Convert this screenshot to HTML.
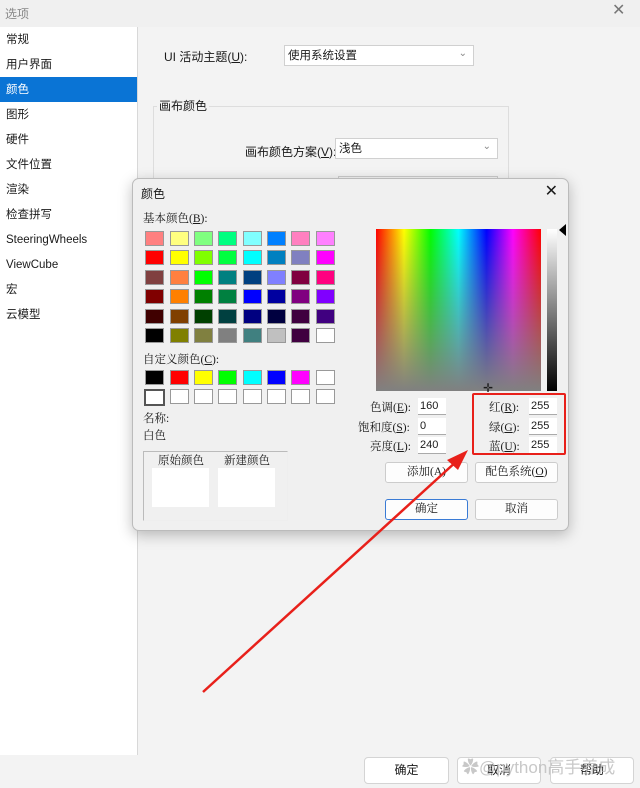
<!DOCTYPE html>
<html><head><meta charset="utf-8"><style>
*{margin:0;padding:0;box-sizing:border-box}
body{width:640px;height:788px;overflow:hidden;background:#f3f3f3;font-family:"Liberation Sans","Noto Sans CJK SC",sans-serif;font-size:12px;color:#1a1a1a;position:relative}
.abs{position:absolute}
.nav{left:0;top:27px;width:138px;height:728px;background:#fff;border-right:1px solid #d8d8d8}
.nav div{height:25px;line-height:26px;padding-left:6px;font-size:11.5px}
.nav .sel{background:#0a74d5;color:#fff}
.combo{background:#fff;border:1px solid #d0d0d0;height:21px;line-height:20px;padding-left:3px;font-size:11.5px}
.combo:after{content:"⌄";position:absolute;right:6px;top:-2px;color:#888;font-size:10px}
.dlg{left:132px;top:178px;width:437px;height:353px;background:#f0f0f0;border:1px solid #bbb;border-radius:7px;box-shadow:0 4px 14px rgba(0,0,0,.25);font-family:"Liberation Serif","Noto Serif CJK SC",serif}
.sw{position:absolute;width:19px;height:15px;border:1px solid #999}
.in{position:absolute;background:#fff;height:17px;border-bottom:1px solid #aaa;font-family:"Liberation Sans",sans-serif;font-size:11px;padding-left:2px;line-height:17px}
.btn{position:absolute;background:#fdfdfd;border:1px solid #ccc;border-radius:3px;text-align:center;line-height:19px;height:21px;font-size:11.5px}
.lbl{position:absolute;font-size:11.5px}
.bb{position:absolute;top:757px;height:27px;background:#fff;border:1px solid #d4d4d4;border-radius:4px;text-align:center;line-height:25px;font-size:12px}
</style></head><body>
<div class="abs" style="left:0;top:0;width:640px;height:27px;background:#f0f0f0"></div>
<div class="abs" style="left:5px;top:5px;color:#888;font-size:12px">选项</div>
<div class="abs" style="left:612px;top:0px;color:#777;font-size:16px">✕</div>
<div class="abs nav">
<div>常规</div><div>用户界面</div><div class="sel">颜色</div><div>图形</div><div>硬件</div><div>文件位置</div><div>渲染</div><div>检查拼写</div><div>SteeringWheels</div><div>ViewCube</div><div>宏</div><div>云模型</div>
</div>
<div class="abs" style="left:164px;top:48px;font-size:12px">UI 活动主题(<u>U</u>):</div>
<div class="abs combo" style="left:284px;top:45px;width:190px">使用系统设置</div>
<div class="abs" style="left:153px;top:106px;width:356px;height:310px;border:1px solid #ddd"></div>
<div class="abs" style="left:157px;top:97px;background:#f3f3f3;padding:0 2px;font-size:12px">画布颜色</div>
<div class="abs" style="left:245px;top:143px;font-size:12px">画布颜色方案(<u>V</u>):</div>
<div class="abs combo" style="left:335px;top:138px;width:163px">浅色</div>
<div class="abs" style="left:338px;top:176px;width:160px;height:4px;border:1px solid #ccc;border-bottom:none"></div>
<div class="bb" style="left:364px;width:85px">确定</div>
<div class="bb" style="left:457px;width:84px">取消</div>
<div class="bb" style="left:550px;width:84px">帮助</div>
<div class="abs" style="left:462px;top:753px;color:rgba(190,190,190,.85);font-size:17px;font-family:'Liberation Sans','Noto Sans CJK SC',sans-serif">✿@python高手养成</div>

<div class="abs dlg">
<div style="position:absolute;left:8px;top:6px;font-size:12px;font-family:'Liberation Sans','Noto Sans CJK SC',sans-serif">颜色</div>
<div style="position:absolute;right:10px;top:2px;font-size:16px;font-family:'Liberation Sans',sans-serif">✕</div>
<div class="lbl" style="left:10px;top:31px">基本颜色(<u>B</u>):</div>
<div id="g"></div>
<div class="lbl" style="left:10px;top:172px">自定义颜色(<u>C</u>):</div>
<div class="lbl" style="left:10px;top:231px">名称:</div>
<div class="lbl" style="left:10px;top:248px">白色</div>
<div style="position:absolute;left:10px;top:272px;width:145px;height:70px;border:1px solid #bbb;border-right-color:#eee;border-bottom-color:#eee"></div>
<div class="lbl" style="left:25px;top:273px">原始颜色</div>
<div class="lbl" style="left:91px;top:273px">新建颜色</div>
<div style="position:absolute;left:19px;top:289px;width:57px;height:39px;background:#fff"></div>
<div style="position:absolute;left:85px;top:289px;width:57px;height:39px;background:#fff"></div>
<div style="position:absolute;left:243px;top:50px;width:165px;height:162px;background:linear-gradient(to bottom,rgba(128,128,128,0),#808080),linear-gradient(to right,#f00,#ff0 17%,#0f0 33%,#0ff 50%,#00f 67%,#f0f 83%,#f00)"></div>
<div style="position:absolute;left:350px;top:202px;font-size:12px;font-family:'Liberation Sans',sans-serif">✛</div>
<div style="position:absolute;left:414px;top:50px;width:10px;height:162px;background:linear-gradient(#fff,#808080 50%,#000)"></div>
<div style="position:absolute;left:426px;top:45px;width:0;height:0;border-top:6px solid transparent;border-bottom:6px solid transparent;border-right:7px solid #000"></div>
<div class="lbl" style="left:237px;top:220px">色调(<u>E</u>):</div>
<div class="lbl" style="left:225px;top:240px">饱和度(<u>S</u>):</div>
<div class="lbl" style="left:237px;top:259px">亮度(<u>L</u>):</div>
<div class="in" style="left:285px;top:219px;width:28px">160</div>
<div class="in" style="left:285px;top:239px;width:28px">0</div>
<div class="in" style="left:285px;top:258px;width:28px">240</div>
<div class="lbl" style="left:356px;top:220px">红(<u>R</u>):</div>
<div class="lbl" style="left:356px;top:240px">绿(<u>G</u>):</div>
<div class="lbl" style="left:356px;top:259px">蓝(<u>U</u>):</div>
<div class="in" style="left:396px;top:219px;width:28px">255</div>
<div class="in" style="left:396px;top:239px;width:28px">255</div>
<div class="in" style="left:396px;top:258px;width:28px">255</div>
<div class="btn" style="left:252px;top:283px;width:83px">添加(A)</div>
<div class="btn" style="left:342px;top:283px;width:83px">配色系统(<u>O</u>)</div>
<div class="btn" style="left:252px;top:320px;width:83px;border:1px solid #3a7bd5">确定</div>
<div class="btn" style="left:342px;top:320px;width:83px">取消</div>
</div>
<div class="abs" style="left:472px;top:393px;width:94px;height:62px;border:2px solid #e8201a;border-radius:2px"></div>
<svg class="abs" style="left:0;top:0" width="640" height="788"><line x1="203" y1="692" x2="458" y2="460" stroke="#e8201a" stroke-width="2.5"/><polygon points="468,450 447,460 458,470" fill="#e8201a"/></svg>
<script>
var c=[["#ff8080","#ffff80","#80ff80","#00ff80","#80ffff","#0080ff","#ff80c0","#ff80ff"],["#ff0000","#ffff00","#80ff00","#00ff40","#00ffff","#0080c0","#8080c0","#ff00ff"],["#804040","#ff8040","#00ff00","#008080","#004080","#8080ff","#800040","#ff0080"],["#800000","#ff8000","#008000","#008040","#0000ff","#0000a0","#800080","#8000ff"],["#400000","#804000","#004000","#004040","#000080","#000040","#400040","#400080"],["#000000","#808000","#808040","#808080","#408080","#c0c0c0","#400040","#ffffff"]];
var cu=[["#000","#f00","#ff0","#0f0","#0ff","#00f","#f0f","#fff"],["#fff","#fff","#fff","#fff","#fff","#fff","#fff","#fff"]];
var h="",xs=[12,37,61,85,110,134,158,183];
c.forEach(function(r,i){r.forEach(function(k,j){h+='<div class="sw" style="left:'+xs[j]+'px;top:'+(52+i*19.4)+'px;background:'+k+'"></div>'})});
cu.forEach(function(r,i){r.forEach(function(k,j){h+='<div class="sw" style="left:'+xs[j]+'px;top:'+(191+i*19)+'px;background:'+k+(i==1&&j==0?';border:2px solid #555;width:21px;height:17px;left:11px':'')+'"></div>'})});
document.getElementById("g").outerHTML=h;
</script>
</body></html>
